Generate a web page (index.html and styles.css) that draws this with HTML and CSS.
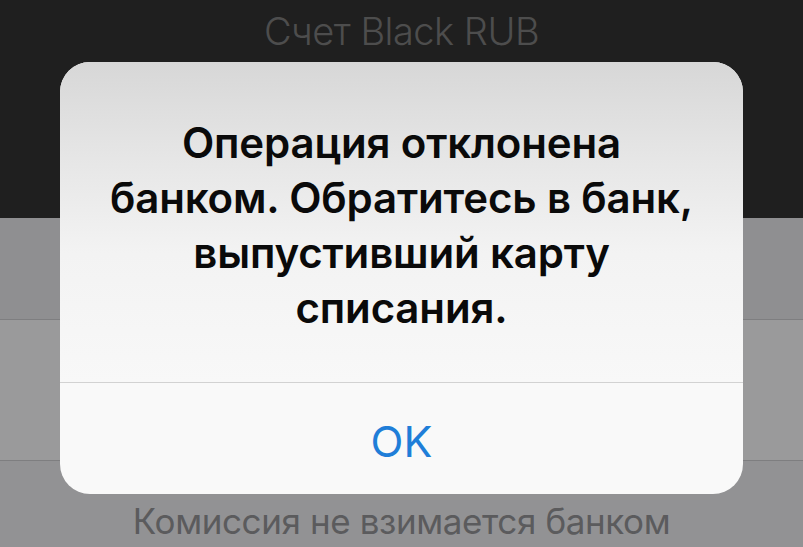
FILE: index.html
```html
<!DOCTYPE html>
<html lang="ru">
<head>
<meta charset="utf-8">
<link rel="stylesheet" href="styles.css">
</head>
<body>
<div class="screen">
  <header class="topbar">
    <div class="topbar-title">Счет Black RUB</div>
  </header>
  <div class="row row-a"></div>
  <div class="row row-b"></div>
  <div class="footer">Комиссия не взимается банком</div>

  <div class="alert">
    <div class="alert-body">
      <p class="alert-text">Операция отклонена<br>банком. Обратитесь в банк,<br>выпустивший карту<br>списания.</p>
    </div>
    <div class="alert-actions">
      <button class="alert-btn">OK</button>
    </div>
  </div>
</div>
</body>
</html>
```

FILE: styles.css
```css
html, body {
  margin: 0;
  padding: 0;
}
body {
  width: 803px;
  height: 547px;
  overflow: hidden;
  font-family: Inter, "Noto Sans", "Liberation Sans", sans-serif;
}
.screen {
  position: relative;
  width: 803px;
  height: 547px;
  display: flex;
  flex-direction: column;
  background: #929294;
}
.topbar {
  height: 218px;
  background: #1f1f1f;
  display: flex;
  justify-content: center;
  flex-shrink: 0;
}
.topbar-title {
  margin-top: 8px;
  font-size: 38px;
  font-weight: 300;
  color: #4d4d4d;
  letter-spacing: -0.5px;
}
.row {
  flex-shrink: 0;
  border-bottom: 1px solid #7e7e80;
}
.row-a {
  height: 101px;
  background: #8f8f91;
}
.row-b {
  height: 140px;
  background: #9a9a9b;
}
.footer {
  flex: 1;
  display: flex;
  align-items: flex-end;
  justify-content: center;
  padding-bottom: 5px;
  font-size: 35px;
  font-weight: 400;
  color: #5b5b5d;
  letter-spacing: -0.4px;
}
.alert {
  position: absolute;
  left: 60px;
  top: 62px;
  width: 683px;
  height: 432px;
  border-radius: 30px;
  overflow: hidden;
  display: flex;
  flex-direction: column;
  background: #f9f9f9;
}
.alert-body {
  height: 320px;
  border-bottom: 1px solid #d2d2d2;
  background: linear-gradient(to bottom, #d7d7d7 0%, #e6e6e6 30%, #f3f3f3 60%, #f8f8f8 100%);
  display: flex;
  align-items: center;
  justify-content: center;
  padding: 0 20px;
}
.alert-text {
  margin: 0;
  margin-top: 6px;
  text-align: center;
  font-size: 42px;
  line-height: 55px;
  font-weight: 600;
  color: #0a0a0a;
  letter-spacing: -0.15px;
}
.alert-actions {
  flex: 1;
  display: flex;
  align-items: center;
  justify-content: center;
}
.alert-btn {
  border: 0;
  background: transparent;
  font-family: Inter, "Noto Sans", "Liberation Sans", sans-serif;
  font-size: 43px;
  font-weight: 400;
  color: #1f7ed8;
  padding: 0;
  margin-top: 4px;
}
```
